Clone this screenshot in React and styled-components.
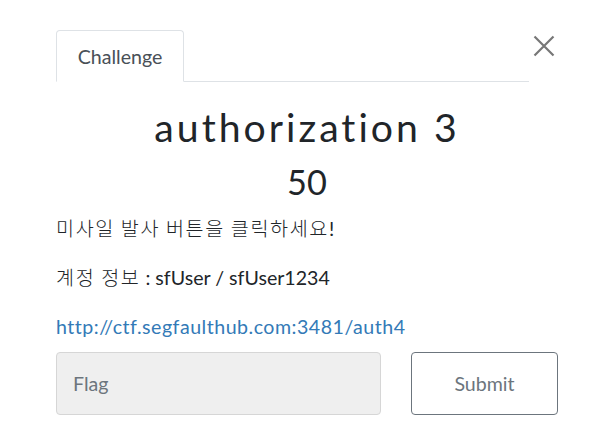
import React from "react";
import styled, { createGlobalStyle } from "styled-components";

const Global = createGlobalStyle`
  html, body { margin: 0; padding: 0; background: #ffffff; }
  body {
    font-family: Lato, "Noto Sans CJK KR", sans-serif;
    font-size: 19.6px;
    color: #212529;
  }
  * { box-sizing: border-box; }
`;

const Modal = styled.div`
  width: 610px;
  height: 438px;
  padding: 30px 52px 0 56px;
  display: flex;
  flex-direction: column;
`;

const Header = styled.div`
  display: flex;
  align-items: flex-start;
`;

const Tabs = styled.nav`
  flex: 1;
  display: flex;
  border-bottom: 1px solid #dee2e6;
`;

const Tab = styled.div`
  width: 128px;
  height: 52px;
  margin-bottom: -1px;
  display: flex;
  align-items: center;
  justify-content: center;
  border: 1px solid #dee2e6;
  border-bottom-color: #ffffff;
  border-radius: 4px 4px 0 0;
  background: #ffffff;
  color: #495057;
  font-family: Lato, sans-serif;
  font-size: 19.6px;
`;

const Close = styled.button`
  width: 29px;
  height: 30px;
  margin-top: 1px;
  padding: 0;
  border: 0;
  background: transparent;
  display: flex;
  align-items: center;
  justify-content: center;
  color: #777777;
`;

const Title = styled.h2`
  margin: 21px 0 0;
  text-align: center;
  font-family: Lato, sans-serif;
  font-weight: 400;
  font-size: 39.2px;
  line-height: 48px;
  letter-spacing: 3px;
  color: #212529;
`;

const Value = styled.h3`
  margin: 10px 0 0;
  text-align: center;
  font-family: Lato, sans-serif;
  font-weight: 400;
  font-size: 34.3px;
  line-height: 42px;
  color: #212529;
`;

const Description = styled.div`
  margin-top: 11px;
`;

const Para = styled.p`
  margin: 0 0 ${(p) => (p.$last ? "11px" : "19.6px")};
  font-family: Lato, "Noto Sans CJK KR", sans-serif;
  font-size: 19.6px;
  line-height: 29.4px;
  color: #212529;
  white-space: nowrap;
`;

const Ko = styled.span`
  font-family: "Noto Sans CJK KR", sans-serif;
  font-weight: 300;
  letter-spacing: 1.6px;
  line-height: 1;
`;

const Link = styled.a`
  color: #337ab7;
  text-decoration: none;
  letter-spacing: 0.5px;
`;

const FormRow = styled.form`
  display: grid;
  grid-template-columns: 325px 147px;
  column-gap: 30px;
`;

const FlagInput = styled.input`
  height: 63px;
  width: 100%;
  padding: 0 16px;
  border: 1px solid #d6d6d6;
  border-radius: 4px;
  background: #efefef;
  font-family: Lato, sans-serif;
  font-size: 19.6px;
  color: #495057;
  outline: none;
  &::placeholder { color: #6c757d; opacity: 1; }
`;

const SubmitButton = styled.button`
  height: 63px;
  width: 100%;
  border: 1px solid #6c757d;
  border-radius: 4px;
  background: #ffffff;
  font-family: Lato, sans-serif;
  font-size: 19.6px;
  color: #6c757d;
`;

export default function App() {
  return (
    <>
      <Global />
      <Modal>
        <Header>
          <Tabs>
            <Tab>Challenge</Tab>
          </Tabs>
          <Close aria-label="Close">
            <svg width="22" height="22" viewBox="0 0 22 22">
              <path d="M1.5 1.5 L20.5 20.5 M20.5 1.5 L1.5 20.5" stroke="currentColor" strokeWidth="2.2" fill="none" />
            </svg>
          </Close>
        </Header>
        <Title>authorization 3</Title>
        <Value>50</Value>
        <Description>
          <Para><Ko>미사일 발사 버튼을 클릭하세요</Ko>!</Para>
          <Para><Ko>계정 정보</Ko> : sfUser / sfUser1234</Para>
          <Para $last>
            <Link href="#">http://ctf.segfaulthub.com:3481/auth4</Link>
          </Para>
        </Description>
        <FormRow onSubmit={(e) => e.preventDefault()}>
          <FlagInput placeholder="Flag" />
          <SubmitButton type="submit">Submit</SubmitButton>
        </FormRow>
      </Modal>
    </>
  );
}
